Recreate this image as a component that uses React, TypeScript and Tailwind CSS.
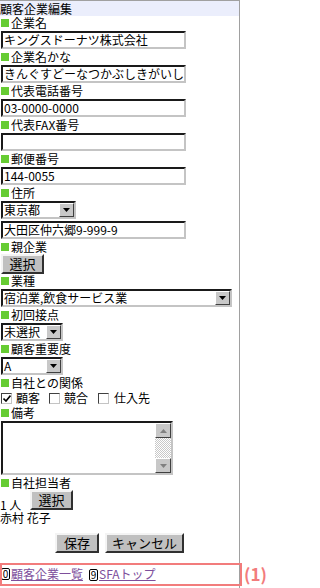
import type { ReactNode } from 'react';

const Mark = () => (
  <span className="ml-[1px] mr-[2px] inline-block h-[8px] w-[8px] shrink-0 bg-[#66cc33]" />
);

const Label = ({ text }: { text: string }) => (
  <div className="flex h-[14px] items-center leading-[14px]">
    <Mark />
    <span>{text}</span>
  </div>
);

const TextBox = ({ value, className }: { value?: string; className: string }) => (
  <div className="py-[1px]">
    <div
      className={`ml-[1px] flex h-[18px] items-center overflow-hidden whitespace-nowrap border-2 border-b-[#c4c4c4] border-l-[#1a1a1a] border-r-[#c4c4c4] border-t-[#1a1a1a] bg-white pl-[1px] leading-[14px] ${className}`}
    >
      {value}
    </div>
  </div>
);

const Arrow = ({ up, gray }: { up?: boolean; gray?: boolean }) => (
  <svg width="7" height="4" viewBox="0 0 7 4" className="block">
    {up ? (
      <path d="M3.5 0 L7 4 L0 4 Z" fill={gray ? '#808080' : '#000'} />
    ) : (
      <path d="M0 0 L7 0 L3.5 4 Z" fill={gray ? '#808080' : '#000'} />
    )}
  </svg>
);

const ArrowButton = ({ up, gray, className }: { up?: boolean; gray?: boolean; className: string }) => (
  <div
    className={`flex shrink-0 items-center justify-center border border-b-[#404040] border-l-white border-r-[#404040] border-t-white bg-[#c8c8c8] ${className}`}
  >
    <Arrow up={up} gray={gray} />
  </div>
);

const Select = ({ value, className }: { value: string; className: string }) => (
  <div className="py-[1px]">
    <div
      className={`ml-[1px] flex h-[18px] items-center border-2 border-b-[#c4c4c4] border-l-[#1a1a1a] border-r-[#c4c4c4] border-t-[#1a1a1a] bg-white leading-[14px] ${className}`}
    >
      <span className="flex-1 overflow-hidden whitespace-nowrap pl-[1px]">{value}</span>
      <ArrowButton className="h-[14px] w-[15px]" />
    </div>
  </div>
);

const Button = ({ children, className }: { children: ReactNode; className: string }) => (
  <div
    className={`flex h-[20px] items-center justify-center border-2 border-b-[#303030] border-l-[#f4f4f4] border-r-[#303030] border-t-[#f4f4f4] bg-[#c0c0c0] text-[13px] leading-[14px] ${className}`}
  >
    {children}
  </div>
);

const Check = ({ checked }: { checked?: boolean }) => (
  <span className="flex h-[11px] w-[11px] shrink-0 items-center justify-center border border-b-[#c4c4c4] border-l-[#404040] border-r-[#c4c4c4] border-t-[#404040] bg-white">
    {checked ? (
      <svg width="8" height="7" viewBox="0 0 8 7">
        <path d="M0.5 3.5 L3 6 L7.5 0.5" stroke="#000" strokeWidth="1.6" fill="none" />
      </svg>
    ) : null}
  </span>
);

const KeyDigit = ({ n }: { n: string }) => (
  <span className="mr-[1px] inline-flex h-[12px] w-[9px] items-center justify-center rounded-[2px] border border-black text-[10px] leading-[10px] text-black">
    {n}
  </span>
);

export default function App() {
  return (
    <div className="relative h-[588px] w-[280px] overflow-hidden bg-white font-['Noto_Sans_CJK_JP',sans-serif] text-[12px] text-black">
      <div className="flex h-[588px] w-[240px] flex-col border-r border-t border-[#a0a0a0]">
        <div className="h-[15px] bg-[#ebeefc] leading-[15px]">顧客企業編集</div>

        <Label text="企業名" />
        <TextBox value="キングスドーナツ株式会社" className="w-[185px]" />
        <Label text="企業名かな" />
        <TextBox value="きんぐすどーなつかぶしきがいしゃ" className="w-[185px]" />
        <Label text="代表電話番号" />
        <TextBox value="03-0000-0000" className="w-[185px]" />
        <Label text="代表FAX番号" />
        <TextBox className="w-[185px]" />
        <Label text="郵便番号" />
        <TextBox value="144-0055" className="w-[185px]" />
        <Label text="住所" />
        <Select value="東京都" className="w-[75px]" />
        <TextBox value="大田区仲六郷9-999-9" className="w-[185px]" />
        <Label text="親企業" />
        <Button className="ml-[1px] w-[43px]">選択</Button>

        <Label text="業種" />
        <Select value="宿泊業,飲食サービス業" className="w-[231px]" />
        <Label text="初回接点" />
        <Select value="未選択" className="w-[62px]" />
        <Label text="顧客重要度" />
        <Select value="A" className="w-[62px]" />
        <Label text="自社との関係" />
        <div className="flex h-[16px] items-center leading-[14px]">
          <span className="ml-[1px]"><Check checked /></span>
          <span className="ml-[4px]">顧客</span>
          <span className="ml-[9px]"><Check /></span>
          <span className="ml-[4px]">競合</span>
          <span className="ml-[10px]"><Check /></span>
          <span className="ml-[5px]">仕入先</span>
        </div>
        <Label text="備考" />
        <div className="py-[1px]">
          <div className="ml-[1px] flex h-[54px] w-[172px] border-2 border-b-[#c4c4c4] border-l-[#1a1a1a] border-r-[#c4c4c4] border-t-[#1a1a1a] bg-white">
            <div className="flex-1" />
            <div className="flex w-[16px] flex-col">
              <ArrowButton up gray className="h-[15px] w-[16px]" />
              <div className="flex-1 bg-[repeating-conic-gradient(#c8c8c8_0_25%,#ffffff_0_50%)] bg-[length:2px_2px]" />
              <ArrowButton gray className="h-[15px] w-[16px]" />
            </div>
          </div>
        </div>
        <Label text="自社担当者" />
        <div className="flex h-[21px] items-end leading-[12px]">
          <span className="w-[30px]">1 人</span>
          <Button className="mb-[1px] w-[43px]">選択</Button>
        </div>
        <div className="h-[14px] leading-[14px]">赤村 花子</div>

        <div className="mt-[8px] flex justify-center gap-[6px]">
          <Button className="w-[44px]">保存</Button>
          <Button className="w-[79px]">キャンセル</Button>
        </div>

        <div className="mt-[10px] h-[1px] bg-[#33336a]" />
        <div className="flex h-[14px] items-center pl-[1px] pt-[5px] leading-[14px]">
          <KeyDigit n="0" />
          <span className="text-[#7e4f9c] underline">顧客企業一覧</span>
          <span className="ml-[6px]"><KeyDigit n="9" /></span>
          <span className="text-[#7e4f9c] underline">SFAトップ</span>
        </div>
      </div>

      <div className="absolute left-[0px] top-[563px] h-[23px] w-[242px] border-2 border-[#f27c7c]" />
      <div className="absolute left-[244px] top-[563px] text-[17px] font-bold leading-[22px] text-[#f27c7c]">
        (1)
      </div>
    </div>
  );
}
